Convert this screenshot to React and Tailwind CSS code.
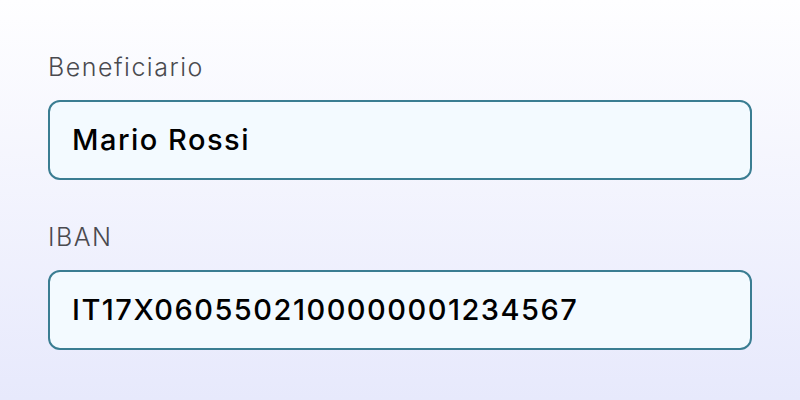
export default function App() {
  return (
    <div
      className="w-[800px] h-[400px] bg-gradient-to-b from-[#fefeff] to-[#e7e9fc] px-12 pt-[50px]"
      style={{ fontFamily: "Inter, 'Noto Sans', sans-serif" }}
    >
      <div className="flex flex-col">
        <label className="text-[25px] leading-[34px] tracking-[1.5px] text-[#4a4a4f] font-light">Beneficiario</label>
        <div className="mt-[16px] h-[80px] rounded-[12px] border-2 border-[#3a7d92] bg-[#f3faff] flex items-center px-[22px]">
          <span className="text-[29px] tracking-[1.5px] font-medium text-black">Mario Rossi</span>
        </div>
        <label className="mt-[40px] text-[25px] leading-[34px] tracking-[1.5px] text-[#4a4a4f] font-light">IBAN</label>
        <div className="mt-[16px] h-[80px] rounded-[12px] border-2 border-[#3a7d92] bg-[#f3faff] flex items-center px-[22px]">
          <span className="text-[29px] tracking-[1.5px] font-medium text-black">IT17X0605502100000001234567</span>
        </div>
      </div>
    </div>
  );
}
